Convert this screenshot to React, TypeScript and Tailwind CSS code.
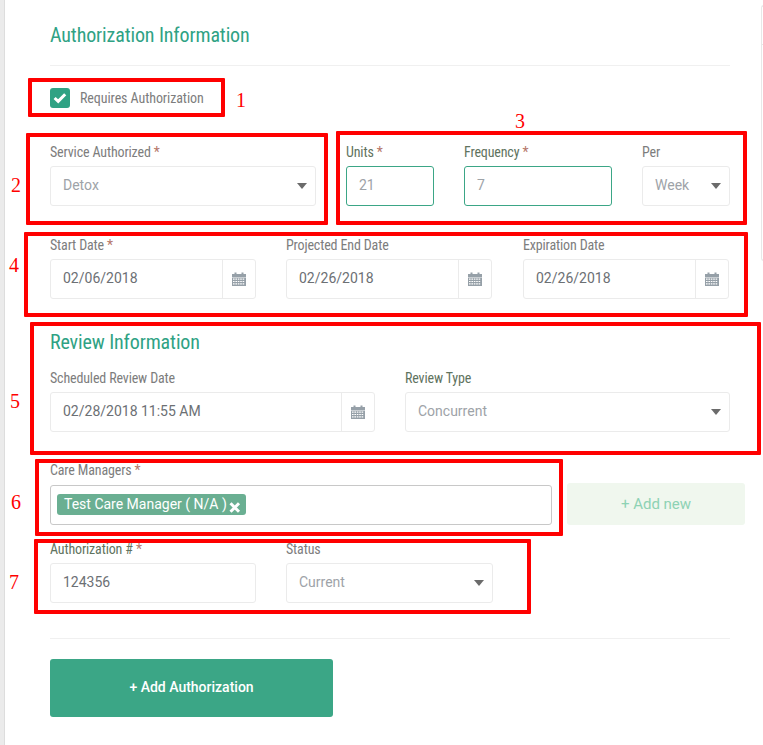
import React from 'react'

const roboto = "font-['Roboto',sans-serif]"
const condensed = "font-['Roboto_Condensed','Roboto',sans-serif] font-stretch-[75%]"

const marks = [
  { id: 1, box: 'left-[28px] top-[78px] w-[197px] h-[39px]', num: 'left-[236px] top-[89px]' },
  { id: 2, box: 'left-[26px] top-[133px] w-[302px] h-[92px]', num: 'left-[11px] top-[174px]' },
  { id: 3, box: 'left-[336px] top-[131px] w-[411px] h-[94px]', num: 'left-[515px] top-[110px]' },
  { id: 4, box: 'left-[24px] top-[232px] w-[724px] h-[85px]', num: 'left-[9px] top-[254px]' },
  { id: 5, box: 'left-[30px] top-[322px] w-[731px] h-[133px]', num: 'left-[10px] top-[390px]' },
  { id: 6, box: 'left-[35px] top-[459px] w-[528px] h-[77px]', num: 'left-[11px] top-[491px]' },
  { id: 7, box: 'left-[34px] top-[539px] w-[497px] h-[75px]', num: 'left-[9px] top-[571px]' },
]

function Label({ text, required, dark }: { text: string; required?: boolean; dark?: boolean }) {
  return (
    <div className={`h-5 mb-1 text-[14px] leading-5 tracking-[-0.15px] whitespace-nowrap ${condensed} ${dark ? 'text-[#5f7360]' : 'text-[#7d7d7d]'}`}>
      {text}
      {required && <span className="text-[#b5776a]"> *</span>}
    </div>
  )
}

function CalendarIcon() {
  return (
    <svg width="14" height="14" viewBox="0 0 14 14" className="text-[#96a0a8]">
      <path fill="currentColor" d="M0 2h2.5V0.5h2V2h5V0.5h2V2H14v3H0z" />
      <path fill="currentColor" fillRule="evenodd" d="M0 5.6h14V14H0zM1 6.6v1.2h1.6V6.6zM3.4 6.6v1.2H5V6.6zM5.8 6.6v1.2h1.6V6.6zM8.2 6.6v1.2h1.6V6.6zM10.6 6.6v1.2h1.6V6.6zM1 8.9v1.2h1.6V8.9zM3.4 8.9v1.2H5V8.9zM5.8 8.9v1.2h1.6V8.9zM8.2 8.9v1.2h1.6V8.9zM10.6 8.9v1.2h1.6V8.9zM1 11.2v1.2h1.6v-1.2zM3.4 11.2v1.2H5v-1.2zM5.8 11.2v1.2h1.6v-1.2zM8.2 11.2v1.2h1.6v-1.2zM10.6 11.2v1.2h1.6v-1.2z" />
    </svg>
  )
}

function Caret() {
  return <span className="mt-px w-0 h-0 border-x-[5px] border-x-transparent border-t-[6px] border-t-[#6b6b6b]" />
}

function SelectBox({ value }: { value: string }) {
  return (
    <div className="h-10 pl-3 pr-2 pb-px flex items-center justify-between rounded-[3px] border border-[#ebebeb] text-[14px] text-[#9ea3a8]">
      <span>{value}</span>
      <Caret />
    </div>
  )
}

function TextBox({ value, active }: { value: string; active?: boolean }) {
  return (
    <div className={`h-10 pl-3 pb-px flex items-center rounded-[3px] border text-[14px] ${active ? 'border-[#3ba686] text-[#9ea3a8]' : 'border-[#ebebeb] text-[#6c7074]'}`}>
      {value}
    </div>
  )
}

function DateBox({ value }: { value: string }) {
  return (
    <div className="h-10 flex rounded-[3px] border border-[#ebebeb] text-[14px] text-[#6c7074]">
      <div className="flex-1 pl-3 pb-px flex items-center">{value}</div>
      <div className="w-[33px] flex items-center justify-center border-l border-[#ebebeb]">
        <CalendarIcon />
      </div>
    </div>
  )
}

export default function App() {
  return (
    <div className={`relative w-[763px] h-[745px] overflow-hidden bg-white flex ${roboto}`}>
      <div className="w-[5px] bg-[#ebebeb] border-r border-[#dddddd] shrink-0" />

      <div className="w-[756px] shrink-0 pl-[45px] pr-[31px]">
        <h2 className={`mt-5 mb-[15px] h-[30px] text-[20px] leading-[30px] tracking-[-0.12px] font-normal text-[#2fa284] ${condensed}`}>
          Authorization Information
        </h2>
        <div className="h-px bg-[#f0f0f0]" />

        <div className="mt-[22px] h-5 flex items-center gap-[10px]">
          <div className="w-5 h-5 rounded-[3px] bg-[#2fa284] flex items-center justify-center">
            <svg width="14" height="12" viewBox="0 0 14 12">
              <path d="M1.6 6 5.2 9.4 12.2 2.2" fill="none" stroke="white" strokeWidth="3" />
            </svg>
          </div>
          <span className={`text-[14px] tracking-[-0.08px] text-[#7d7d7d] ${condensed}`}>Requires Authorization</span>
        </div>

        <div className="mt-[34px] flex">
          <div className="w-[266px]">
            <Label text="Service Authorized" required />
            <SelectBox value="Detox" />
          </div>
          <div className="ml-[30px] w-[88px]">
            <Label text="Units" required dark />
            <TextBox value="21" active />
          </div>
          <div className="ml-[30px] w-[148px]">
            <Label text="Frequency" required dark />
            <TextBox value="7" active />
          </div>
          <div className="ml-[30px] w-[88px]">
            <Label text="Per" />
            <SelectBox value="Week" />
          </div>
        </div>

        <div className="mt-[29px] flex">
          <div className="w-[206px]">
            <Label text="Start Date" required />
            <DateBox value="02/06/2018" />
          </div>
          <div className="ml-[30px] w-[206px]">
            <Label text="Projected End Date" />
            <DateBox value="02/26/2018" />
          </div>
          <div className="ml-[31px] w-[206px]">
            <Label text="Expiration Date" />
            <DateBox value="02/26/2018" />
          </div>
        </div>

        <h2 className={`mt-[28px] h-[30px] text-[20px] leading-[30px] tracking-[-0.12px] font-normal text-[#2fa284] ${condensed}`}>
          Review Information
        </h2>

        <div className="mt-[11px] flex">
          <div className="w-[325px]">
            <Label text="Scheduled Review Date" />
            <DateBox value="02/28/2018 11:55 AM" />
          </div>
          <div className="ml-[30px] w-[325px]">
            <Label text="Review Type" dark />
            <SelectBox value="Concurrent" />
          </div>
        </div>

        <div className="mt-[28px] flex items-end">
          <div className="w-[502px] shrink-0">
            <div className="pb-px">
              <Label text="Care Managers" required />
            </div>
            <div className="h-10 pl-[6px] pb-px flex items-center rounded-[3px] border border-[#c8c8c8]">
              <div className="h-[21px] pl-[7px] pr-[5px] flex items-center gap-[2px] rounded-[3px] bg-[#6aaf92] text-[14px] text-white">
                <span>Test Care Manager ( N/A )</span>
                <svg width="12" height="11" viewBox="0 0 12 11" className="mt-[5px]">
                  <path d="M1.5 1.2 10 9.8M10 1.2 1.5 9.8" stroke="white" strokeWidth="3" />
                </svg>
              </div>
            </div>
          </div>
          <div className="ml-[15px] w-[178px] h-[42px] shrink-0 flex items-center justify-center rounded-[3px] bg-[#f0f7ee] text-[15px] text-[#8ed2b4]">
            + Add new
          </div>
        </div>

        <div className="mt-[14px] flex">
          <div className="w-[206px]">
            <Label text="Authorization #" required dark />
            <TextBox value="124356" />
          </div>
          <div className="ml-[30px] w-[207px]">
            <Label text="Status" />
            <SelectBox value="Current" />
          </div>
        </div>

        <div className="mt-[35px] h-px bg-[#f0f0f0]" />

        <button className="mt-5 pb-px block w-[283px] h-[58px] rounded-[3px] bg-[#3ba686] text-[14px] font-medium text-white">
          + Add Authorization
        </button>
      </div>

      <div className="mt-[5px] w-[10px] h-[256px] shrink-0 rounded-l-[3px] border border-r-0 border-[#e8e8e8]">
        <div className="mt-[38px] h-px bg-[#e8e8e8]" />
      </div>

      {marks.map((m) => (
        <React.Fragment key={m.id}>
          <div className={`absolute rounded-[1px] border-[4px] border-[#ff0000] pointer-events-none ${m.box}`} />
          <span className={`absolute font-['Liberation_Serif',serif] text-[20px] leading-[22px] text-[#ff0000] ${m.num}`}>{m.id}</span>
        </React.Fragment>
      ))}
    </div>
  )
}
